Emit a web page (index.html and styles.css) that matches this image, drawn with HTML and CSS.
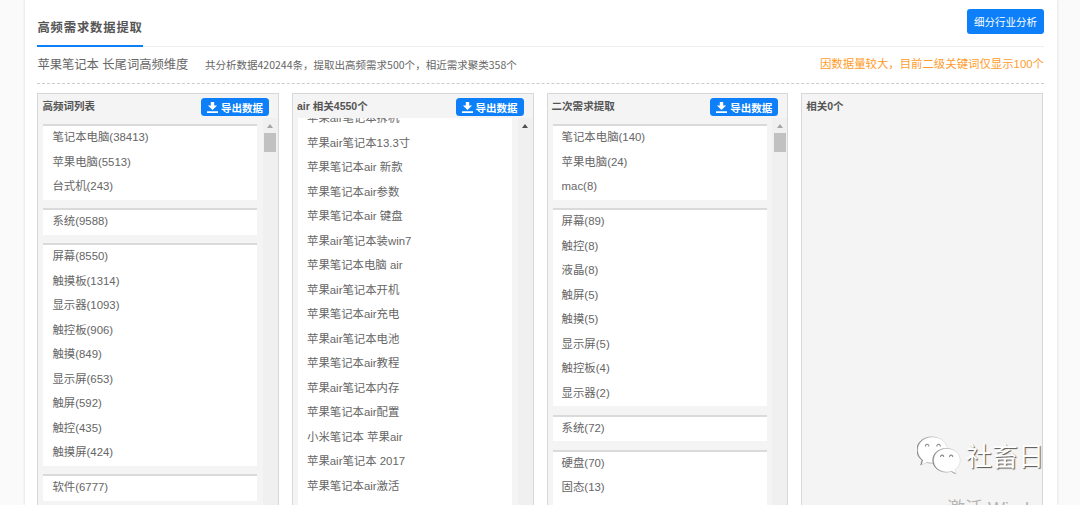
FILE: index.html
```html
<!DOCTYPE html>
<html lang="zh-CN">
<head>
    <meta charset="UTF-8">
    <meta name="viewport" content="width=device-width, initial-scale=1.0">
    <title>高频需求数据提取</title>
    <link rel="stylesheet" href="styles.css">
</head>
<body>
    <svg class="defs">
        <symbol id="download" viewBox="0 0 11 11">
            <path d="M3.8 0h3.4v3.6h2.9L5.5 8 .9 3.6h2.9zM0 9.3h11V11H0z" fill="currentColor"/>
        </symbol>
    </svg>

    <div class="card">
        <div class="top">
            <h2 class="tab">高频需求数据提取</h2>
            <button class="analyse" type="button">细分行业分析</button>
        </div>

        <div class="summary">
            <span class="keyword">苹果笔记本 长尾词高频维度</span>
            <span class="count">共分析数据420244条，提取出高频需求500个，相近需求聚类358个</span>
            <span class="notice">因数据量较大，目前二级关键词仅显示100个</span>
        </div>

        <div class="columns">
            <!-- High frequency words -->
            <div class="column">
                <div class="column-head">
                    <h3>高频词列表</h3>
                    <button class="export" type="button"><svg><use href="#download"/></svg>导出数据</button>
                </div>
                <div class="scroll">
                    <div class="groups">
                        <ul>
                            <li>笔记本电脑(38413)</li>
                            <li>苹果电脑(5513)</li>
                            <li>台式机(243)</li>
                        </ul>
                        <ul>
                            <li>系统(9588)</li>
                        </ul>
                        <ul>
                            <li>屏幕(8550)</li>
                            <li>触摸板(1314)</li>
                            <li>显示器(1093)</li>
                            <li>触控板(906)</li>
                            <li>触摸(849)</li>
                            <li>显示屏(653)</li>
                            <li>触屏(592)</li>
                            <li>触控(435)</li>
                            <li>触摸屏(424)</li>
                        </ul>
                        <ul>
                            <li>软件(6777)</li>
                        </ul>
                    </div>
                    <div class="track"><i class="arrow"></i><i class="thumb"></i></div>
                </div>
            </div>

            <!-- Related words -->
            <div class="column">
                <div class="column-head">
                    <h3>air 相关4550个</h3>
                    <button class="export" type="button"><svg><use href="#download"/></svg>导出数据</button>
                </div>
                <div class="scroll">
                    <div class="groups scrolled">
                        <ul>
                            <li>苹果air笔记本拆机</li>
                            <li>苹果air笔记本13.3寸</li>
                            <li>苹果笔记本air 新款</li>
                            <li>苹果笔记本air参数</li>
                            <li>苹果笔记本air 键盘</li>
                            <li>苹果air笔记本装win7</li>
                            <li>苹果笔记本电脑 air</li>
                            <li>苹果air笔记本开机</li>
                            <li>苹果笔记本air充电</li>
                            <li>苹果air笔记本电池</li>
                            <li>苹果笔记本air教程</li>
                            <li>苹果air笔记本内存</li>
                            <li>苹果笔记本air配置</li>
                            <li>小米笔记本 苹果air</li>
                            <li>苹果air笔记本 2017</li>
                            <li>苹果笔记本air激活</li>
                        </ul>
                    </div>
                    <div class="track"><i class="arrow active"></i></div>
                </div>
            </div>

            <!-- Second extraction -->
            <div class="column">
                <div class="column-head">
                    <h3>二次需求提取</h3>
                    <button class="export" type="button"><svg><use href="#download"/></svg>导出数据</button>
                </div>
                <div class="scroll">
                    <div class="groups">
                        <ul>
                            <li>笔记本电脑(140)</li>
                            <li>苹果电脑(24)</li>
                            <li>mac(8)</li>
                        </ul>
                        <ul>
                            <li>屏幕(89)</li>
                            <li>触控(8)</li>
                            <li>液晶(8)</li>
                            <li>触屏(5)</li>
                            <li>触摸(5)</li>
                            <li>显示屏(5)</li>
                            <li>触控板(4)</li>
                            <li>显示器(2)</li>
                        </ul>
                        <ul>
                            <li>系统(72)</li>
                        </ul>
                        <ul class="open">
                            <li>硬盘(70)</li>
                            <li>固态(13)</li>
                        </ul>
                    </div>
                    <div class="track"><i class="arrow"></i><i class="thumb"></i></div>
                </div>
            </div>

            <div class="column">
                <div class="column-head">
                    <h3>相关0个</h3>
                </div>
            </div>
        </div>
    </div>

    <div class="watermark">
        <svg class="wechat" viewBox="0 0 44 39">
            <path class="bubble" d="M15.5 1C7 1 .7 6.800.7 14c0 4.300 2.100 7.800 5.300 10.200L4.600 29l5.400-2.700c1.800.5 3.600.7 5.500.7C24 27 30.500 21.200 30.500 14S24 1 15.500 1z"/>
            <path class="bubble" d="M30 12.500c-7.400 0-13.300 5-13.300 11.800S22.600 36 30 36c1.700 0 3.300-.3 4.800-.8l4.600 2.500-1.200-4.100c3-2.200 5-5.400 5-9.300 0-6.800-5.900-11.800-13.200-11.800z"/>
            <path class="eye" d="M8.500 10.500a1.700 1.700 0 1 1 3.200 0M20 10.500a1.700 1.700 0 1 1 3.200 0M23.700 21a1.500 1.500 0 1 1 2.900 0M32.700 21a1.500 1.500 0 1 1 2.900 0"/>
        </svg>
        <span>社畜日</span>
    </div>
    <div class="activate">激活 Wind</div>
</body>
</html>
```
FILE: styles.css
```css
* {
    box-sizing: border-box;
}
body {
    margin: 0;
    height: 505px;
    overflow: hidden;
    background: #fafafa;
    color: #666;
    font-family: "Liberation Sans", "Noto Sans CJK SC", sans-serif;
    font-size: 11.4px;
}
h2, h3, ul {
    margin: 0;
    padding: 0;
}
button {
    border: none;
    padding: 0;
    background: #0d7ff9;
    color: #fff;
    font-family: inherit;
    white-space: nowrap;
}
.defs {
    display: none;
}
.card {
    width: 1032px;
    height: 505px;
    margin-left: 25px;
    padding: 0 13px 0 12.4px;
    background: #fff;
    box-shadow: 0 0 3px rgba(0, 0, 0, 0.14);
    display: flex;
    flex-direction: column;
}
.top {
    height: 47px;
    flex: none;
    display: flex;
    justify-content: space-between;
    align-items: flex-start;
    box-shadow: inset 0 -1px #eee;
}
.tab {
    height: 47px;
    padding-top: 10px;
    border-bottom: 2px solid #0d7ff9;
    color: #555;
    font-size: 12.3px;
    letter-spacing: 0.87px;
    line-height: 37px;
}
.analyse {
    width: 77px;
    height: 25px;
    margin-top: 9px;
    border-radius: 3px;
    font-size: 10.5px;
}
.summary {
    height: 37px;
    flex: none;
    display: flex;
    line-height: 36px;
    border-bottom: 1px dashed #ccc;
}
.keyword {
    font-size: 12.3px;
}
.count {
    margin-left: 16.5px;
    font-family: "Noto Sans CJK SC", sans-serif;
    font-size: 10.52px;
}
.notice {
    margin-left: auto;
    color: #ff9c2b;
    line-height: 34px;
}
.columns {
    flex: 1;
    min-height: 0;
    margin-top: 9px;
    display: grid;
    grid-template-columns: repeat(4, 241.6px);
    column-gap: 13px;
}
.column {
    min-height: 0;
    background: #f4f4f4;
    border: 1px solid #d8d8d8;
    border-bottom: none;
    display: flex;
    flex-direction: column;
    overflow: hidden;
}
.column-head {
    height: 24px;
    flex: none;
    padding: 0 9px 0 4px;
    display: flex;
    justify-content: space-between;
    align-items: flex-start;
}
.column-head h3 {
    color: #555;
    font-size: 10.52px;
    line-height: 24px;
}
.export {
    width: 68px;
    height: 18px;
    margin-top: 4px;
    border-radius: 3.5px;
    display: flex;
    align-items: center;
    justify-content: center;
    gap: 3px;
    font-size: 10.52px;
    font-weight: bold;
}
.export svg {
    width: 11px;
    height: 11px;
}
.scroll {
    flex: 1;
    min-height: 0;
    overflow: hidden;
    display: flex;
    justify-content: space-between;
}
.groups {
    width: 219px;
    padding: 6px 0 0 5px;
}
.scrolled {
    margin-top: -13px;
    padding-top: 0;
}
.groups ul {
    width: 214px;
    margin-bottom: 8.5px;
    border-top: 2px solid #dadada;
    background: #fff;
    list-style: none;
}
.scrolled ul {
    height: 420px;
}
.open {
    height: 80px;
}
.groups li {
    height: 24.53px;
    padding-left: 9px;
    line-height: 23px;
    white-space: nowrap;
}
.track {
    width: 15px;
    background: #f0f0f0;
    display: flex;
    flex-direction: column;
    align-items: center;
}
.arrow {
    margin-top: 6px;
    border: 3.5px solid transparent;
    border-top: none;
    border-bottom: 4px solid #a5a5a5;
}
.active {
    border-bottom-color: #505050;
}
.thumb {
    width: 12px;
    height: 19px;
    margin-top: 5px;
    background: #c1c1c1;
}

/* watermark over the last column */
.watermark {
    position: absolute;
    left: 917px;
    top: 436px;
    width: 127px;
    height: 44px;
    overflow: hidden;
    display: flex;
    gap: 5px;
    color: #fff;
    font-size: 26px;
    line-height: 42px;
    white-space: nowrap;
    text-shadow: 1px 1px 1px #555;
}
.wechat {
    width: 44px;
    height: 39px;
    flex: none;
}
.bubble {
    fill: #fff;
    stroke: #ccc;
    stroke-width: 0.5;
    filter: drop-shadow(-0.3px 0.9px 0.4px #777);
}
.eye {
    fill: none;
    stroke: #888;
    stroke-width: 1.1;
}
.activate {
    position: absolute;
    left: 947px;
    top: 497px;
    color: #b5b5b5;
    font-size: 18px;
    line-height: 24px;
}
```
